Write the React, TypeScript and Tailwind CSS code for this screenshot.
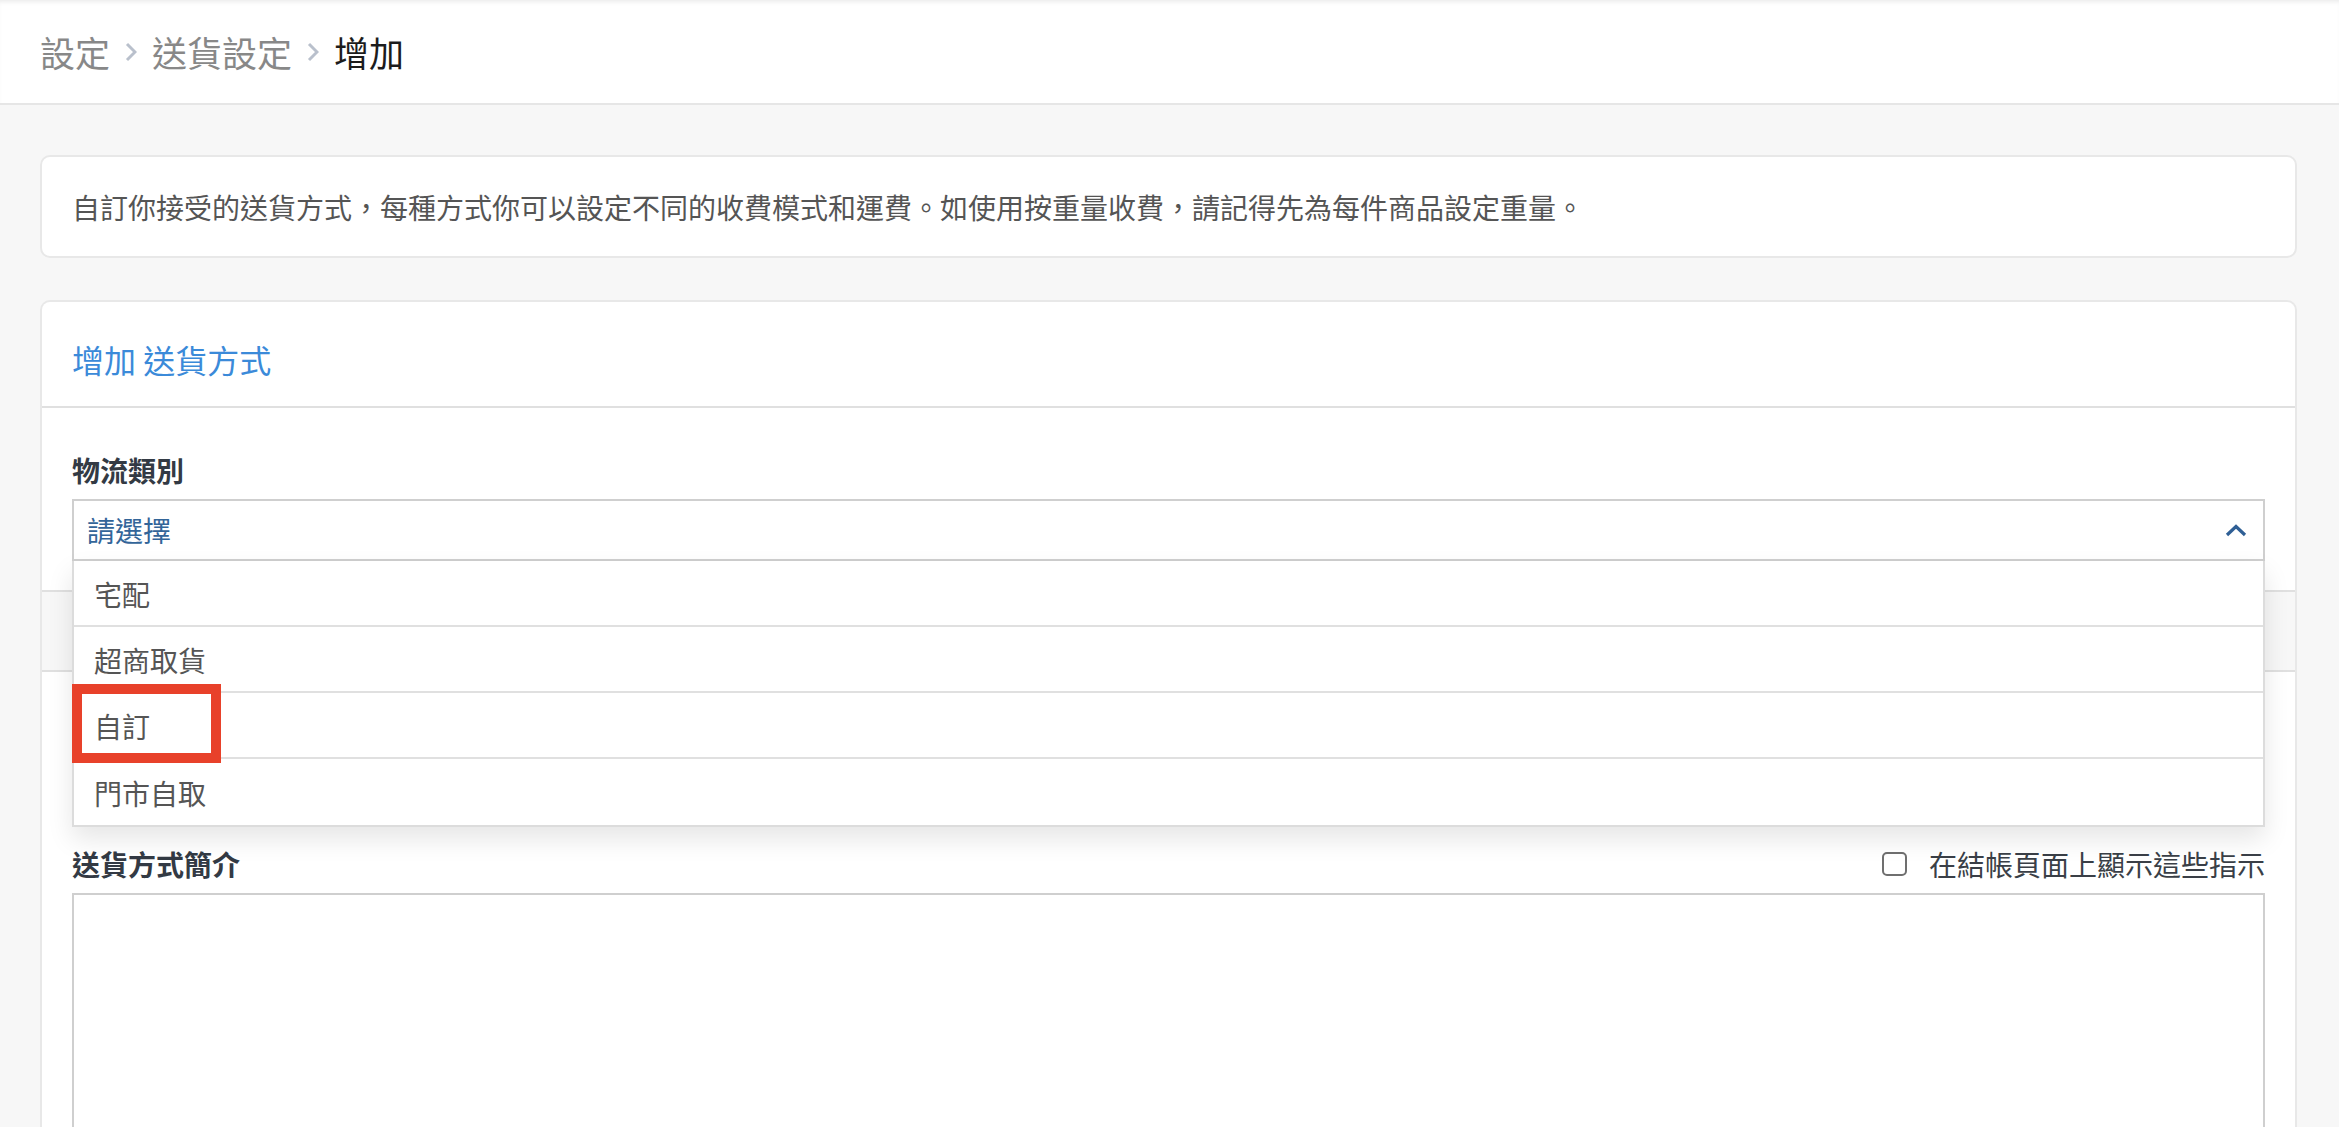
import React from 'react';

const options = ['宅配', '超商取貨', '自訂', '門市自取'];

const Chevron = () => (
  <svg width="12" height="20" viewBox="0 0 12 20" fill="none">
    <path d="M2 2l8 8-8 8" stroke="#b9c0cc" strokeWidth="3" />
  </svg>
);

const App: React.FC = () => {
  return (
    <div
      className="w-full h-[1127px] overflow-hidden bg-[#f7f7f7]"
      style={{ fontFamily: '"Noto Sans CJK TC", "Noto Sans", sans-serif' }}
    >
      {/* breadcrumb bar */}
      <div className="h-[105px] bg-white border-b-2 border-[#e6e6e6] shadow-[inset_0_4px_4px_-2px_rgba(0,0,0,0.08)] flex items-center px-[40px]">
        <div className="flex items-center gap-[15px] text-[35px] leading-none text-[#888]">
          <span>設定</span>
          <Chevron />
          <span>送貨設定</span>
          <Chevron />
          <span className="text-[#1c1c1c]">增加</span>
        </div>
      </div>

      <div className="pl-[40px] pr-[42px] pt-[50px]">
        {/* info card */}
        <div className="h-[103px] bg-white border-2 border-[#e8e8e8] rounded-[10px] px-[30px] flex items-center">
          <p className="text-[28px] leading-none text-[#555]">
            自訂你接受的送貨方式，每種方式你可以設定不同的收費模式和運費。如使用按重量收費，請記得先為每件商品設定重量。
          </p>
        </div>

        {/* form card */}
        <div className="mt-[42px] bg-white border-2 border-b-0 border-[#e8e8e8] rounded-t-[10px]">
          <div className="h-[106px] border-b-2 border-[#e0e0e0] px-[30px] flex items-center pt-[10px]">
            <h2 className="text-[32px] leading-none text-[#3b8ad9]">增加 送貨方式</h2>
          </div>

          <div className="px-[30px] pt-[42px] pb-[29px]">
            <label className="block h-[40px] leading-[40px] text-[28px] font-bold text-[#333a44]">物流類別</label>
            <div className="relative mt-[9px]">
              <div className="h-[62px] border-2 border-[#cfcfcf] bg-white flex items-center justify-between pl-[13px] pr-[16px]">
                <span className="text-[28px] leading-none text-[#336599]">請選擇</span>
                <svg width="22" height="13" viewBox="0 0 22 13" fill="none">
                  <path d="M2 11l9-8.5 9 8.5" stroke="#2f5f95" strokeWidth="3.2" />
                </svg>
              </div>

              {/* open dropdown */}
              <div className="absolute left-0 right-0 top-[62px] z-10 bg-white border-2 border-t-0 border-[#dcdcdc] shadow-[0_12px_24px_rgba(0,0,0,0.1)]">
                {options.map((o, i) => (
                  <div
                    key={o}
                    className={`h-[66px] flex items-center pl-[20px] pt-[2px] text-[28px] leading-none text-[#555] ${
                      i < options.length - 1 ? 'border-b-2 border-[#e0e0e0]' : ''
                    }`}
                  >
                    {o}
                  </div>
                ))}
                <div className="absolute -left-[2px] top-[123px] w-[149px] h-[79px] border-[10px] border-[#e8412a]" />
              </div>
            </div>
          </div>

          <div className="h-[82px] bg-[#f7f7f7] border-y-2 border-[#e0e0e0]" />

          <div className="px-[30px] pt-[42px]">
            {/* field hidden under the open dropdown */}
            <div className="h-[40px]" />
            <div className="mt-[9px] h-[62px] border-2 border-[#cfcfcf]" />

            <div className="mt-[19px] flex items-center justify-between h-[40px]">
              <label className="text-[28px] leading-none font-bold text-[#333a44]">送貨方式簡介</label>
              <div className="flex items-center gap-[22px]">
                <span className="w-[25px] h-[24px] rounded-[5px] border-2 border-[#6f6f6f]" />
                <span className="text-[28px] leading-none text-[#3a3f47]">在結帳頁面上顯示這些指示</span>
              </div>
            </div>
            <div className="mt-[9px] h-[320px] border-2 border-[#cfcfcf]" />
          </div>
        </div>
      </div>
    </div>
  );
};

export default App;
